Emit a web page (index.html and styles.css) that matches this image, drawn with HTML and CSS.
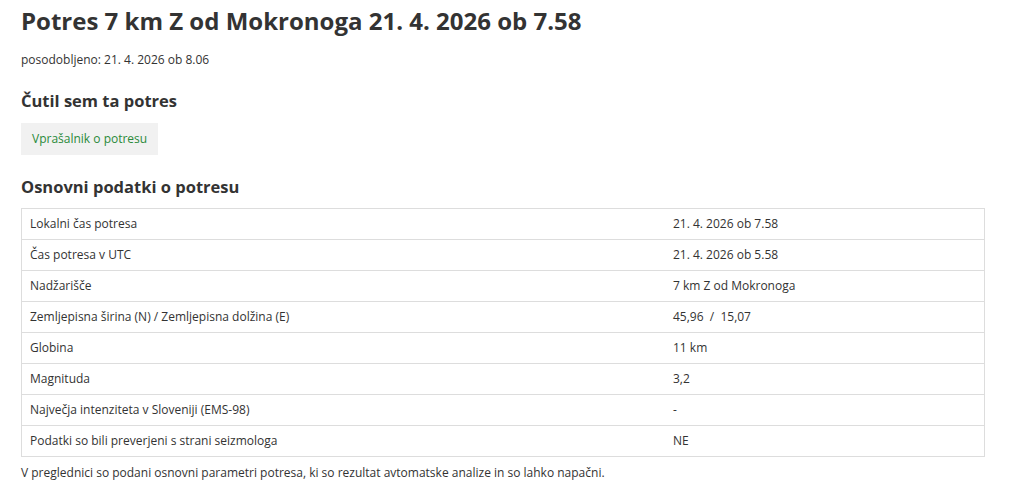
FILE: index.html
```html
<!DOCTYPE html>
<html lang="sl">
<head>
<meta charset="utf-8">
<link rel="stylesheet" href="styles.css">
</head>
<body>
<main class="page">
  <h1 class="title">Potres 7 km Z od Mokronoga 21. 4. 2026 ob 7.58</h1>
  <p class="updated">posodobljeno: 21. 4. 2026 ob 8.06</p>
  <h2 class="section">Čutil sem ta potres</h2>
  <a class="btn" href="#">Vprašalnik o potresu</a>
  <h2 class="section section-data">Osnovni podatki o potresu</h2>
  <table class="data">
    <tr><td class="k">Lokalni čas potresa</td><td class="v">21. 4. 2026 ob 7.58</td></tr>
    <tr><td class="k">Čas potresa v UTC</td><td class="v">21. 4. 2026 ob 5.58</td></tr>
    <tr><td class="k">Nadžarišče</td><td class="v">7 km Z od Mokronoga</td></tr>
    <tr><td class="k">Zemljepisna širina (N) / Zemljepisna dolžina (E)</td><td class="v">45,96 &nbsp;/ &nbsp;15,07</td></tr>
    <tr><td class="k">Globina</td><td class="v">11 km</td></tr>
    <tr><td class="k">Magnituda</td><td class="v">3,2</td></tr>
    <tr><td class="k">Največja intenziteta v Sloveniji (EMS-98)</td><td class="v">-</td></tr>
    <tr><td class="k">Podatki so bili preverjeni s strani seizmologa</td><td class="v">NE</td></tr>
  </table>
  <p class="note">V preglednici so podani osnovni parametri potresa, ki so rezultat avtomatske analize in so lahko napačni.</p>
</main>
</body>
</html>
```
FILE: styles.css
```css
html, body { margin: 0; padding: 0; background: #fff; }
body { font-family: "Open Sans", "Noto Sans", sans-serif; color: #333; font-size: 12px; }
.page { padding: 0 39px 0 21px; }
.title { font-size: 24px; font-weight: 700; margin: 0; padding-top: 4px; line-height: 34px; color: #333; }
.updated { margin: 13px 0 0; line-height: 18px; }
.section { font-size: 16.5px; font-weight: 700; margin: 0; line-height: 24px; color: #333; }
.page .section:first-of-type { margin-top: 20px; }
.btn { display: inline-block; margin-top: 10px; background: #f1f1f1; color: #2a8a3a; text-decoration: none; padding: 7px 11px; line-height: 18px; }
.section-data { margin-top: 20px; }
.data { margin-top: 9px; width: 100%; border-collapse: collapse; border: 1px solid #ddd; }
.data td { border-top: 1px solid #ddd; padding: 6px 8px; line-height: 18px; height: 18px; }
.data td.k { width: 627px; }
.note { margin: 7px 0 0; line-height: 18px; }
```
